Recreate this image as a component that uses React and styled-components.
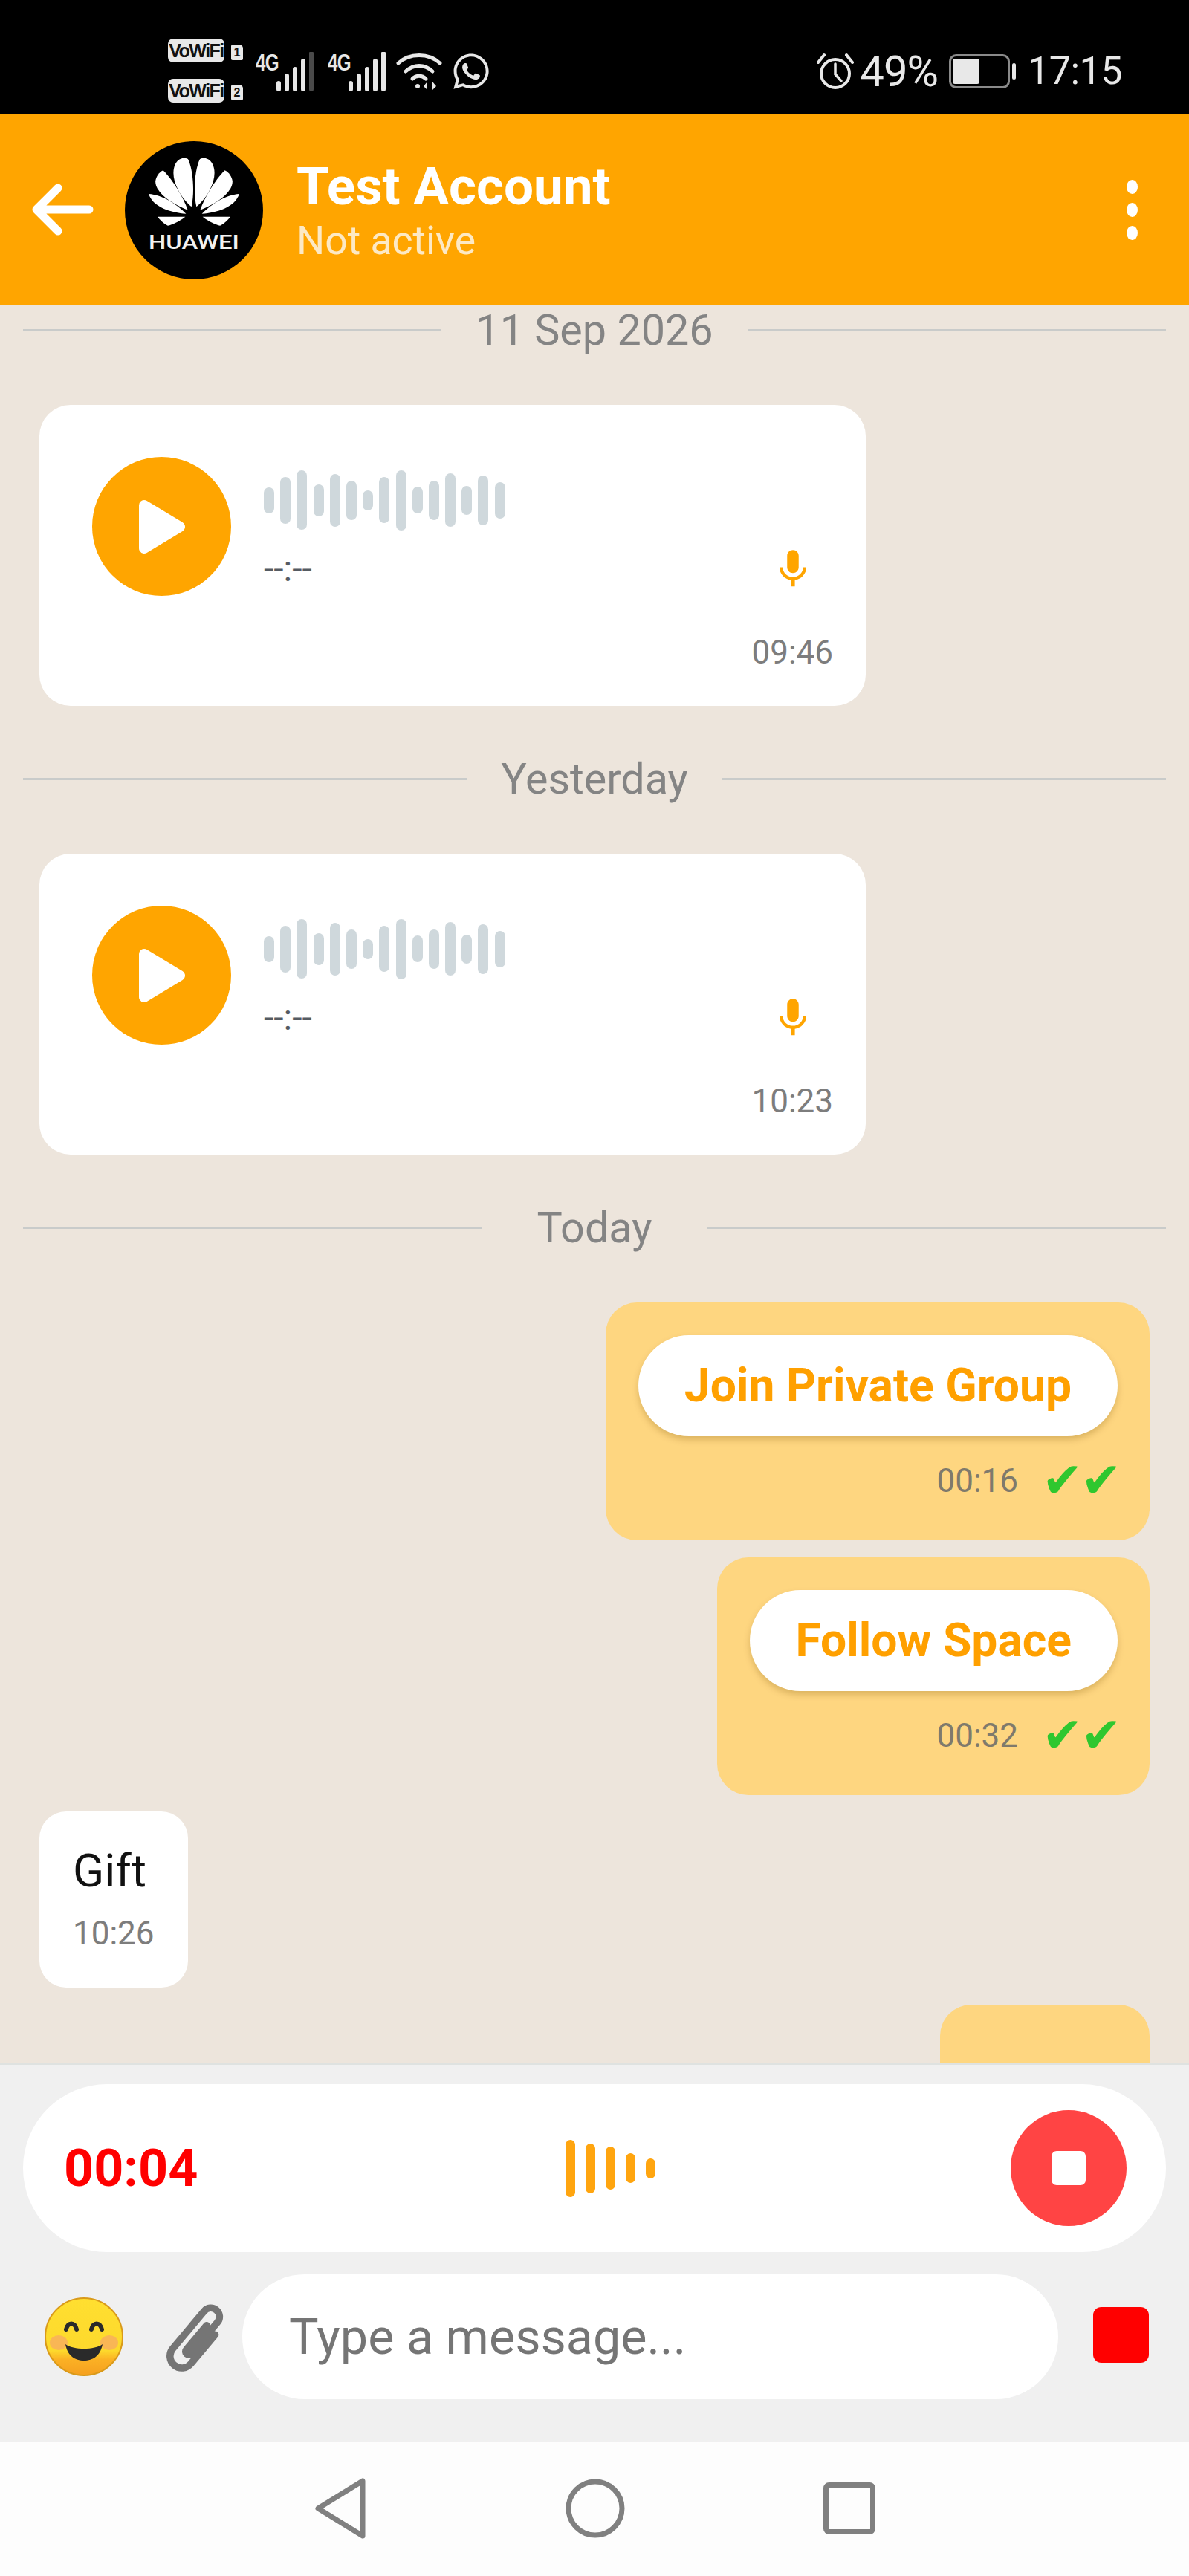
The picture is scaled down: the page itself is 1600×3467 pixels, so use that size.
import React from "react";
import styled, { createGlobalStyle } from "styled-components";
import { FaWhatsapp } from "react-icons/fa";
import { MdMic } from "react-icons/md";

const Global = createGlobalStyle`
  html, body { margin: 0; padding: 0; background: #fff; }
  * { box-sizing: border-box; }
  body { font-family: Roboto, "Noto Sans", sans-serif; }
`;

const Page = styled.div`
  width: 1600px;
  height: 3467px;
  display: flex;
  flex-direction: column;
  overflow: hidden;
  background: #ede5dc;
`;

const StatusBar = styled.div`
  height: 153px;
  flex: none;
  background: #000;
  color: #e8e8e8;
  display: flex;
  align-items: center;
  justify-content: space-between;
  padding: 38px 90px 0 226px;
`;
const StatusGroup = styled.div`
  display: flex;
  align-items: center;
`;
const SimStack = styled.div`
  display: flex;
  flex-direction: column;
  gap: 22px;
  margin-right: 17px;
  margin-top: -2px;
`;
const SimRow = styled.div`
  display: flex;
  align-items: center;
  gap: 9px;
`;
const VoWifi = styled.span`
  width: 76px;
  height: 32px;
  border-radius: 7px;
  background: #e8e8e8;
  color: #111;
  font: 700 25px/32px "Liberation Sans", sans-serif;
  letter-spacing: -1.5px;
  text-align: center;
  white-space: nowrap;
  overflow: hidden;
`;
const SimNo = styled.span`
  width: 16px;
  height: 21px;
  margin-top: 6px;
  border-radius: 2px 5px 2px 2px;
  background: #e8e8e8;
  color: #111;
  font: 700 16px/21px "Liberation Sans", sans-serif;
  text-align: center;
`;
const Signal = styled.div`
  display: flex;
  align-items: flex-start;
  margin-right: ${(p) => p.$mr}px;
  height: 52px;
`;
const FourG = styled.span`
  font: 700 31px/28px "Liberation Sans", sans-serif;
  letter-spacing: -1px;
  transform: scaleX(0.78);
  transform-origin: left top;
  width: 27px;
  margin-top: 1px;
`;
const PctText = styled.span`
  font: 400 58px/54px Roboto, sans-serif;
  margin: 0 15px 0 8px;
  letter-spacing: -1px;
`;
const ClockText = styled.span`
  font: 400 52px/54px Roboto, sans-serif;
  margin-left: 14px;
  letter-spacing: -0.5px;
`;

const Header = styled.header`
  height: 257px;
  flex: none;
  background: #ffa500;
  display: flex;
  align-items: center;
  padding: 0 0 0 42px;
  color: #fff;
`;
const Avatar = styled.svg`
  width: 186px;
  height: 186px;
  flex: none;
  margin-left: 42px;
  margin-top: 2px;
`;
const Peer = styled.div`
  margin: 3px 0 0 45px;
  flex: 1;
  display: flex;
  flex-direction: column;
`;
const PeerName = styled.div`
  font-size: 71px;
  line-height: 80px;
  font-weight: 700;
`;
const PeerState = styled.div`
  font-size: 53.5px;
  line-height: 62px;
  color: #fde9c4;
  margin-top: 2px;
`;
const Kebab = styled.div`
  width: 16px;
  margin-right: 68px;
  display: flex;
  flex-direction: column;
  gap: 12px;
  margin-top: 2px;
`;
const Dot = styled.span`
  width: 15px;
  height: 19px;
  border-radius: 50%;
  background: #fff;
`;

const Messages = styled.main`
  flex: 1;
  min-height: 0;
  overflow: hidden;
  padding: 0 31px;
  display: flex;
  flex-direction: column;
`;
const Sep = styled.div`
  height: 64px;
  flex: none;
  margin-top: ${(p) => p.$mt}px;
  padding-top: 4px;
  display: flex;
  align-items: center;
  gap: ${(p) => p.$gap}px;
  font-size: 57.5px;
  color: #848484;
`;
const SepLine = styled.span`
  flex: 1;
  height: 3px;
  background: #c9cbca;
`;
const AudioCard = styled.article`
  width: 1112px;
  height: 405px;
  flex: none;
  margin: 71px 0 0 22px;
  background: #fff;
  border-radius: 42px;
  padding: 70px 44px 0 71px;
  display: flex;
  flex-direction: column;
`;
const AudioMain = styled.div`
  display: flex;
  gap: 44px;
`;
const PlayBtn = styled.div`
  width: 187px;
  height: 187px;
  flex: none;
  border-radius: 50%;
  background: #ffa500;
  display: flex;
  align-items: center;
  justify-content: center;
`;
const AudioBody = styled.div`
  flex: 1;
  display: flex;
  flex-direction: column;
`;
const Wave = styled.div`
  height: 84px;
  margin-top: 16px;
  display: flex;
  align-items: center;
  gap: 8.2px;
`;
const WaveBar = styled.span`
  width: 14px;
  height: ${(p) => p.$h}px;
  border-radius: 7px;
  background: #cfd8dc;
`;
const AudioFoot = styled.div`
  display: flex;
  justify-content: space-between;
  align-items: center;
  margin-top: 22px;
  height: 56px;
`;
const Duration = styled.span`
  font-size: 48px;
  color: #555b62;
`;
const MicWrap = styled.span`
  display: flex;
  color: #ffa500;
  margin: 2px 23px 0 0;
`;
const AudioTime = styled.div`
  font-size: 44px;
  line-height: 50px;
  color: #7d7d7d;
  text-align: right;
  margin-top: 51px;
`;
const OutBubble = styled.article`
  align-self: flex-end;
  flex: none;
  margin: ${(p) => p.$mt}px 22px 0 0;
  height: 320px;
  background: #fed680;
  border-radius: 42px;
  padding: 44px 43px 0 44px;
`;
const ActionBtn = styled.div`
  height: 136px;
  padding: 0 62px;
  border-radius: 68px;
  background: #fff;
  color: #ffa000;
  font-size: 62.4px;
  font-weight: 700;
  line-height: 136px;
  white-space: nowrap;
  box-shadow: 0 5px 9px rgba(120, 80, 0, 0.25);
`;
const Meta = styled.div`
  display: flex;
  justify-content: flex-end;
  align-items: center;
  height: 60px;
  margin-top: 30px;
  gap: 32px;
`;
const MetaTime = styled.span`
  font-size: 44px;
  color: #7f7a6c;
`;
const Ticks = styled.span`
  font: 700 66px/60px "DejaVu Sans", sans-serif;
  color: #2fc72f;
  letter-spacing: -3px;
  width: 102px;
  white-space: nowrap;
`;
const InBubble = styled.article`
  align-self: flex-start;
  flex: none;
  margin: 22px 0 0 22px;
  width: 200px;
  height: 237px;
  border-radius: 36px;
  background: #fff;
  padding: 46px 0 0 45px;
`;
const InText = styled.div`
  font-size: 62px;
  line-height: 68px;
  color: #111;
`;
const InTime = styled.div`
  font-size: 44px;
  line-height: 52px;
  color: #7d7d7d;
  margin-top: 24px;
`;
const PartialBubble = styled.article`
  align-self: flex-end;
  flex: none;
  width: 282px;
  height: 240px;
  margin: 23px 22px 0 0;
  background: #fed680;
  border-radius: 42px;
`;

const Footer = styled.footer`
  height: 511px;
  flex: none;
  background: #f0f0f0;
  border-top: 3px solid #dfe2e0;
  padding: 26px 31px 0;
  display: flex;
  flex-direction: column;
`;
const RecPill = styled.div`
  height: 226px;
  flex: none;
  background: #fff;
  border-radius: 113px;
  display: flex;
  align-items: center;
  padding: 0 53px 0 55px;
`;
const RecTime = styled.span`
  font-size: 70px;
  font-weight: 700;
  color: #f00;
`;
const RecWave = styled.div`
  flex: 1;
  display: flex;
  justify-content: center;
  align-items: center;
  gap: 14px;
  padding-left: 17px;
`;
const RecBar = styled.span`
  width: 13px;
  height: ${(p) => p.$h}px;
  border-radius: 7px;
  background: #ffa50f;
`;
const StopBtn = styled.div`
  width: 156px;
  height: 156px;
  flex: none;
  border-radius: 50%;
  background: #ff4444;
  display: flex;
  align-items: center;
  justify-content: center;
`;
const StopSquare = styled.span`
  width: 46px;
  height: 46px;
  border-radius: 7px;
  background: #fff;
`;
const InputRow = styled.div`
  height: 168px;
  margin-top: 30px;
  flex: none;
  display: flex;
  align-items: center;
  padding-left: 26px;
`;
const ClipIcon = styled.svg`
  width: 92px;
  height: 100px;
  flex: none;
  margin: 0 7px 0 53px;
`;
const EmojiIcon = styled.svg`
  width: 112px;
  height: 112px;
  flex: none;
`;
const InputPill = styled.div`
  width: 1098px;
  height: 168px;
  flex: none;
  margin-left: 5px;
  border-radius: 84px;
  background: #fff;
  display: flex;
  align-items: center;
  padding-left: 63px;
  font-size: 66.5px;
  color: #757575;
`;
const SendStop = styled.span`
  width: 75px;
  height: 75px;
  flex: none;
  margin: -6px 0 0 47px;
  border-radius: 11px;
  background: #f00;
`;
const NavBar = styled.nav`
  height: 180px;
  flex: none;
  background: #fdfdfd;
  display: flex;
  align-items: center;
  justify-content: center;
  gap: 267px;
  padding-bottom: 2px;
`;

const waves = [35, 63, 80, 43, 71, 53, 27, 62, 81, 36, 53, 72, 39, 67, 49];
const recWaves = [77, 67, 58, 40, 27];

function Huawei() {
  const petals = (
    <>
      <path d="M350 322C300 280 268 210 280 165C286 135 312 118 336 130C356 170 364 260 350 322Z" />
      <path d="M335 335C270 310 205 265 205 220C207 200 220 182 236 175C272 210 316 280 335 335Z" />
      <path d="M328 350C270 345 195 325 178 270C232 274 290 310 328 350Z" />
      <path d="M325 362C300 382 272 394 255 398C238 390 225 376 213 362Z" />
    </>
  );
  return (
    <Avatar viewBox="82 58 556 556">
      <circle cx="360" cy="336" r="278" fill="#000" />
      <g fill="#fff">
        {petals}
        <g transform="translate(720 0) scale(-1 1)">{petals}</g>
      </g>
      <text x="178" y="490" fill="#f2f2f2" textLength="364" lengthAdjust="spacingAndGlyphs" fontFamily="Roboto, sans-serif" fontWeight="500" fontSize="78">HUAWEI</text>
    </Avatar>
  );
}

function Bars({ dim }) {
  const xs = [2, 13, 24, 35, 46];
  const hs = [10, 20, 29, 40, 50];
  return (
    <svg width="52" height="52" viewBox="0 0 52 52">
      {xs.map((x, i) => (
        <line key={x} x1={x + 2} x2={x + 2} y1={50} y2={50 - hs[i] + 2} stroke={dim && i === 4 ? "#4a4a4a" : "#e8e8e8"} strokeWidth="6" strokeLinecap="round" />
      ))}
    </svg>
  );
}

function Play() {
  return (
    <svg width="64" height="74" viewBox="0 0 64 74" style={{ marginLeft: 1 }}>
      <path d="M8 8L56 37L8 66Z" fill="#fff" stroke="#fff" strokeWidth="14" strokeLinejoin="round" />
    </svg>
  );
}

function AudioMessage({ time }) {
  return (
    <AudioCard>
      <AudioMain>
        <PlayBtn><Play /></PlayBtn>
        <AudioBody>
          <Wave>{waves.map((h, i) => <WaveBar key={i} $h={h} />)}</Wave>
          <AudioFoot>
            <Duration>--:--</Duration>
            <MicWrap><MdMic size={62} /></MicWrap>
          </AudioFoot>
        </AudioBody>
      </AudioMain>
      <AudioTime>{time}</AudioTime>
    </AudioCard>
  );
}

function Action({ label, time, mt }) {
  return (
    <OutBubble $mt={mt}>
      <ActionBtn>{label}</ActionBtn>
      <Meta>
        <MetaTime>{time}</MetaTime>
        <Ticks>✔✔</Ticks>
      </Meta>
    </OutBubble>
  );
}

function DateSep({ label, mt, gap = 46 }) {
  return (
    <Sep $mt={mt} $gap={gap}>
      <SepLine />
      <span>{label}</span>
      <SepLine />
    </Sep>
  );
}

export default function App() {
  return (
    <Page>
      <Global />
      <StatusBar>
        <StatusGroup>
          <SimStack>
            <SimRow><VoWifi>VoWiFi</VoWifi><SimNo>1</SimNo></SimRow>
            <SimRow><VoWifi>VoWiFi</VoWifi><SimNo>2</SimNo></SimRow>
          </SimStack>
          <Signal $mr={18}><FourG>4G</FourG><Bars dim /></Signal>
          <Signal $mr={13}><FourG>4G</FourG><Bars /></Signal>
          <svg width="62" height="52" viewBox="0 0 62 52" fill="none" stroke="#e8e8e8" strokeWidth="5" strokeLinecap="round">
            <path d="M3 15C18 1 44 1 59 15" />
            <path d="M13 26C24 16 38 16 49 26" />
            <path d="M22 36C27 31 35 31 40 36" />
            <circle cx="29" cy="46" r="3" fill="#e8e8e8" stroke="none" />
            <path d="M42 40L37 46L42 51ZM49 40L54 46L49 51Z" fill="#e8e8e8" stroke="none" />
          </svg>
          <FaWhatsapp size={54} style={{ marginLeft: 12 }} />
        </StatusGroup>
        <StatusGroup>
          <svg width="50" height="50" viewBox="0 0 50 50" fill="none" stroke="#e8e8e8" strokeWidth="4" strokeLinecap="round">
            <circle cx="25" cy="28" r="19" />
            <path d="M25 15V29L33 38" strokeWidth="3.5" />
            <path d="M2 13L10 3M48 13L40 3" />
          </svg>
          <PctText>49%</PctText>
          <svg width="92" height="46" viewBox="0 0 92 46" fill="none">
            <rect x="1.5" y="1.5" width="79" height="43" rx="8" stroke="#8a8a8a" strokeWidth="3" />
            <rect x="5" y="6" width="36" height="34" rx="3" fill="#e8e8e8" />
            <rect x="85" y="12" width="5" height="22" rx="2.5" fill="#e8e8e8" />
          </svg>
          <ClockText>17:15</ClockText>
        </StatusGroup>
      </StatusBar>

      <Header>
        <svg width="84" height="70" viewBox="0 0 84 70" fill="none" stroke="#fff" strokeWidth="11" strokeLinecap="round" strokeLinejoin="round">
          <path d="M78 35H8M36 6L7 35L36 64" />
        </svg>
        <Huawei />
        <Peer>
          <PeerName>Test Account</PeerName>
          <PeerState>Not active</PeerState>
        </Peer>
        <Kebab><Dot /><Dot /><Dot /></Kebab>
      </Header>

      <Messages>
        <DateSep label="11 Sep 2026" mt={0} />
        <AudioMessage time="09:46" />
        <DateSep label="Yesterday" mt={64} />
        <AudioMessage time="10:23" />
        <DateSep label="Today" mt={64} gap={75} />
        <Action label="Join Private Group" time="00:16" mt={71} />
        <Action label="Follow Space" time="00:32" mt={23} />
        <InBubble>
          <InText>Gift</InText>
          <InTime>10:26</InTime>
        </InBubble>
        <PartialBubble />
      </Messages>

      <Footer>
        <RecPill>
          <RecTime>00:04</RecTime>
          <RecWave>{recWaves.map((h, i) => <RecBar key={i} $h={h} />)}</RecWave>
          <StopBtn><StopSquare /></StopBtn>
        </RecPill>
        <InputRow>
          <EmojiIcon viewBox="0 0 112 112">
            <defs>
              <linearGradient id="face" x1="0" y1="0" x2="0" y2="1">
                <stop offset="0" stopColor="#ffdf30" />
                <stop offset="0.68" stopColor="#fdd92c" />
                <stop offset="0.8" stopColor="#fbb024" />
                <stop offset="1" stopColor="#f5a01f" />
              </linearGradient>
            </defs>
            <circle cx="56" cy="56" r="52" fill="url(#face)" stroke="#d99a1a" strokeWidth="2" />
            <ellipse cx="22" cy="64" rx="12" ry="10" fill="#f6a766" opacity="0.7" />
            <ellipse cx="90" cy="64" rx="12" ry="10" fill="#f6a766" opacity="0.7" />
            <path d="M32 46C34 36 44 36 46 46M66 46C68 36 78 36 80 46" fill="none" stroke="#2a2a2a" strokeWidth="6" strokeLinecap="round" />
            <path d="M31 66C42 74 70 74 81 66C78 82 68 88 56 88C44 88 34 82 31 66Z" fill="#2a2a2a" />
          </EmojiIcon>
          <ClipIcon viewBox="0 0 90 100">
            <g transform="rotate(40 45 50) translate(28 -2) scale(1.06)" fill="none" stroke="#757575" strokeWidth="9" strokeLinecap="round" strokeLinejoin="round">
              <path d="M30 34V82A15 15 0 0 1 0 82V20A11 11 0 0 1 22 20V72A4 4 0 0 1 14 72V32" />
            </g>
          </ClipIcon>
          <InputPill>Type a message...</InputPill>
          <SendStop />
        </InputRow>
      </Footer>

      <NavBar>
        <svg width="72" height="84" viewBox="0 0 72 84" fill="none" stroke="#808080" strokeWidth="7" strokeLinejoin="round">
          <path d="M66 5V79L6 42Z" />
        </svg>
        <svg width="80" height="80" viewBox="0 0 80 80" fill="none" stroke="#808080" strokeWidth="7">
          <circle cx="40" cy="40" r="36" />
        </svg>
        <svg width="70" height="70" viewBox="0 0 70 70" fill="none" stroke="#808080" strokeWidth="7">
          <rect x="3.5" y="3.5" width="63" height="63" rx="4" />
        </svg>
      </NavBar>
    </Page>
  );
}
